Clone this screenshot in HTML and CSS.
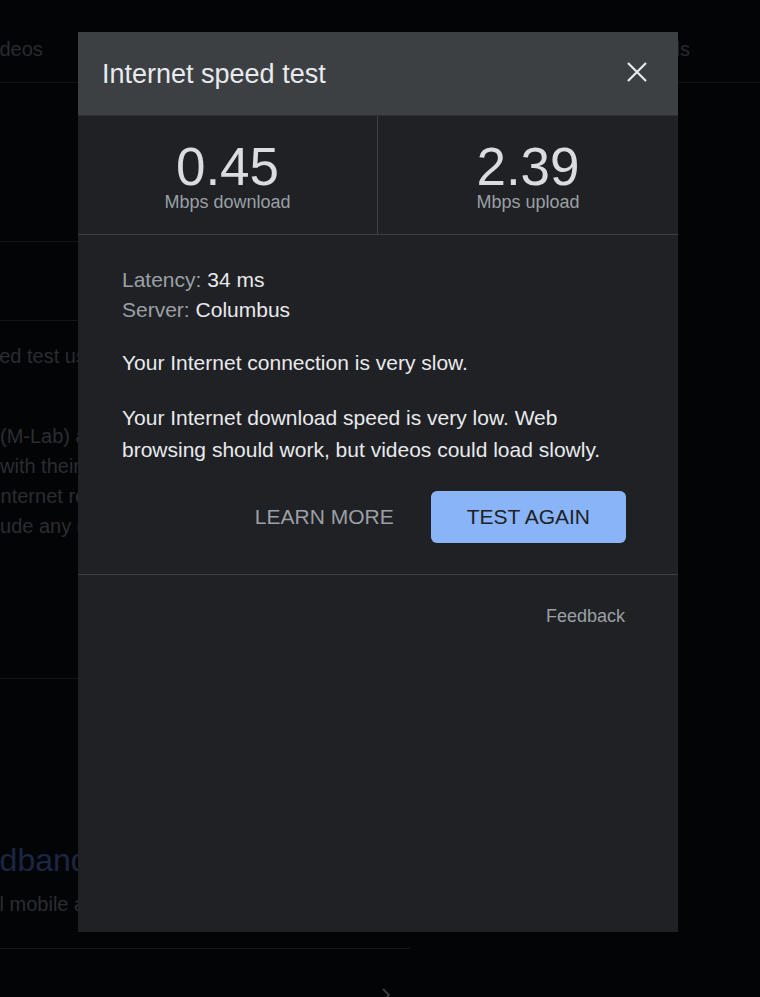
FILE: index.html
```html
<!DOCTYPE html>
<html lang="en">
<head>
<meta charset="utf-8">
<title>Internet speed test</title>
<link rel="stylesheet" href="styles.css">
</head>
<body>
<div class="page">
  <div class="tabs">
    <span class="tab tab-first">Videos</span>
    <span class="tab">Tools</span>
  </div>
  <div class="column">
    <div class="sec sec-a"></div>
    <div class="sec sec-b"></div>
    <div class="sec sec-c">
      <div class="bg-line cut1">speed test uses Measurement Lab</div>
      <div class="bg-line gap">(M-Lab) and your IP address is shared</div>
      <div class="bg-line">with their privacy policy. M-Lab conducts</div>
      <div class="bg-line cut2">Internet research. Published information</div>
      <div class="bg-line cut3">include any other information about you</div>
    </div>
    <div class="sec sec-d">
      <div class="bg-title cut4">Broadband speed</div>
      <div class="bg-line cut5">all mobile access</div>
    </div>
    <div class="more-row">
      <svg class="chev" width="16" height="16" viewBox="0 0 16 16"><path d="M5 2l6 6-6 6" fill="none" stroke="#3a3b3e" stroke-width="2"/></svg>
    </div>
  </div>
</div>

<div class="dialog" role="dialog" aria-label="Internet speed test">
  <div class="dlg-head">
    <h1 class="dlg-title">Internet speed test</h1>
    <svg class="close" width="22" height="22" viewBox="0 0 22 22" aria-label="Close"><path d="M2 2L20 20M20 2L2 20" stroke="#e8eaed" stroke-width="2.2" fill="none"/></svg>
  </div>
  <div class="stats">
    <div class="stat stat-left">
      <div class="num">0.45</div>
      <div class="unit">Mbps download</div>
    </div>
    <div class="stat">
      <div class="num">2.39</div>
      <div class="unit">Mbps upload</div>
    </div>
  </div>
  <div class="dlg-body">
    <div class="info"><span class="lbl">Latency:</span> <span class="val">34 ms</span></div>
    <div class="info"><span class="lbl">Server:</span> <span class="val">Columbus</span></div>
    <p class="msg msg-first">Your Internet connection is very slow.</p>
    <p class="msg">Your Internet download speed is very low. Web browsing should work, but videos could load slowly.</p>
    <div class="actions">
      <span class="btn btn-text">LEARN MORE</span>
      <span class="btn btn-primary">TEST AGAIN</span>
    </div>
  </div>
  <div class="dlg-foot">
    <span class="feedback">Feedback</span>
  </div>
</div>
</body>
</html>
```

FILE: styles.css
```css
html, body {
  margin: 0;
  padding: 0;
  overflow: hidden;
  height: 100%;
}
body {
  background: #030406;
  font-family: "Liberation Sans", Arial, sans-serif;
  color: #e8eaed;
}

/* background page (dimmed) */
.page {
  width: 760px;
}
.tabs {
  height: 45px;
  padding: 37px 70px 0 0;
  border-bottom: 1px solid #131416;
  display: flex;
  justify-content: space-between;
  font-size: 20px;
  line-height: 24px;
  color: #2a2b2e;
}
.tab-first {
  margin-left: -18px;
}
.column {
  width: 410px;
}
.sec {
  border-bottom: 1px solid #141518;
}
.sec-a {
  height: 158px;
}
.sec-b {
  height: 78px;
}
.sec-c {
  height: 337px;
  padding-top: 20px;
  overflow: hidden;
}
.bg-line {
  font-size: 20px;
  line-height: 30px;
  color: #2c2d30;
  white-space: nowrap;
}
.gap {
  margin-top: 50px;
}
.cut1 { text-indent: -33px; }
.cut2 { text-indent: -5px; }
.cut3 { text-indent: -30px; }
.cut5 { text-indent: -16px; }
.sec-d {
  height: 110px;
  padding-top: 159px;
  overflow: hidden;
}
.bg-title {
  font-size: 32px;
  line-height: 44px;
  color: #1b2742;
  white-space: nowrap;
  margin-bottom: 7px;
}
.cut4 { text-indent: -68px; }
.more-row {
  padding: 38px 0 0 378px;
}
.chev {
  display: block;
}

/* dialog */
.dialog {
  position: absolute;
  top: 32px;
  left: 78px;
  width: 600px;
  height: 900px;
  background: #202124;
  display: flex;
  flex-direction: column;
  overflow: hidden;
}
.dlg-head {
  height: 84px;
  box-sizing: border-box;
  background: #3c4043;
  border-bottom: 1px solid #2e3034;
  display: flex;
  align-items: center;
  justify-content: space-between;
  padding: 0 30px 0 24px;
  flex-shrink: 0;
}
.dlg-title {
  margin: 0;
  font-size: 27px;
  font-weight: normal;
  color: #e8eaed;
  line-height: 32px;
}
.close {
  display: block;
  margin-bottom: 3px;
}
.stats {
  display: grid;
  grid-template-columns: 1fr 1fr;
  border-bottom: 1px solid #3c4043;
}
.stat {
  padding: 24px 0 23px;
  text-align: center;
}
.stat-left {
  border-right: 1px solid #3c4043;
}
.num {
  font-size: 53px;
  line-height: 53px;
  color: #dadce0;
}
.unit {
  font-size: 18px;
  line-height: 18px;
  color: #9aa0a6;
}
.dlg-body {
  padding: 30px 52px 31px 44px;
  border-bottom: 1px solid #3c4043;
}
.info {
  font-size: 21px;
  line-height: 30px;
}
.lbl {
  color: #9aa0a6;
}
.val {
  color: #e8eaed;
}
.msg {
  margin: 23px 0 0;
  font-size: 21px;
  line-height: 32px;
  color: #e8eaed;
}
.msg-first {
  margin-top: 22px;
}
.actions {
  margin-top: 25px;
  display: flex;
  justify-content: flex-end;
}
.btn {
  height: 52px;
  line-height: 52px;
  padding: 0 36px;
  font-size: 21px;
  border-radius: 6px;
}
.btn-text {
  color: #9aa0a6;
  padding-right: 37px;
}
.btn-primary {
  background: #8ab4f8;
  color: #202124;
}
.dlg-foot {
  padding: 29px 53px 0 0;
  display: flex;
  justify-content: flex-end;
}
.feedback {
  font-size: 18px;
  line-height: 24px;
  color: #9aa0a6;
}
```
